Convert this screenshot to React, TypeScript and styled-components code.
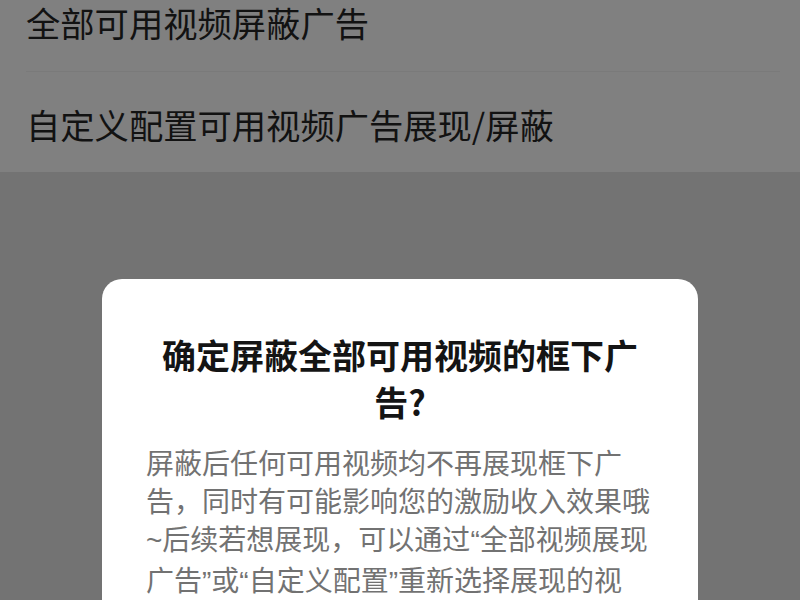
import React from "react";
import styled, { createGlobalStyle } from "styled-components";

const Global = createGlobalStyle`
  html, body { margin: 0; padding: 0; background: #737373; overflow: hidden; }
  body { font-family: "Noto Sans CJK SC", "Noto Sans", sans-serif; }
`;

const Page = styled.div`
  width: 800px;
  height: 600px;
  overflow: hidden;
  background: #737373;
  display: flex;
  flex-direction: column;
`;

const List = styled.div`
  background: #808080;
  display: flex;
  flex-direction: column;
  margin-top: -28px;
`;

const Row = styled.div<{ $divider?: boolean }>`
  height: 100px;
  display: flex;
  align-items: center;
  margin: 0 20px 0 26px;
  font-size: 34.3px;
  color: #121212;
  box-sizing: border-box;
  border-bottom: ${(p) => (p.$divider ? "1px solid #7a7a7a" : "none")};
  padding-top: ${(p) => (p.$divider ? "0" : "4px")};
`;

const Dialog = styled.div`
  margin: 107px auto 0;
  width: 596px;
  background: #ffffff;
  border-radius: 20px;
  padding: 52px 44px 40px;
  box-sizing: border-box;
  flex-shrink: 0;
`;

const Title = styled.div`
  font-size: 34px;
  font-weight: 700;
  line-height: 47px;
  text-align: center;
  color: #141414;
`;

const Body = styled.div`
  margin-top: 18px;
  font-size: 28px;
  line-height: 38px;
  color: #727272;
`;

const Quote = styled.span`
  font-family: "Liberation Sans", sans-serif;
`;

export default function App() {
  return (
    <Page>
      <Global />
      <List>
        <Row $divider>全部可用视频屏蔽广告</Row>
        <Row>自定义配置可用视频广告展现/屏蔽</Row>
      </List>
      <Dialog>
        <Title>确定屏蔽全部可用视频的框下广告?</Title>
        <Body>
          屏蔽后任何可用视频均不再展现框下广告，同时有可能影响您的激励收入效果哦
          <Quote>~</Quote>后续若想展现，可以通过<Quote>“</Quote>全部视频展现广告
          <Quote>”</Quote>或<Quote>“</Quote>自定义配置<Quote>”</Quote>
          重新选择展现的视频。
        </Body>
      </Dialog>
    </Page>
  );
}
